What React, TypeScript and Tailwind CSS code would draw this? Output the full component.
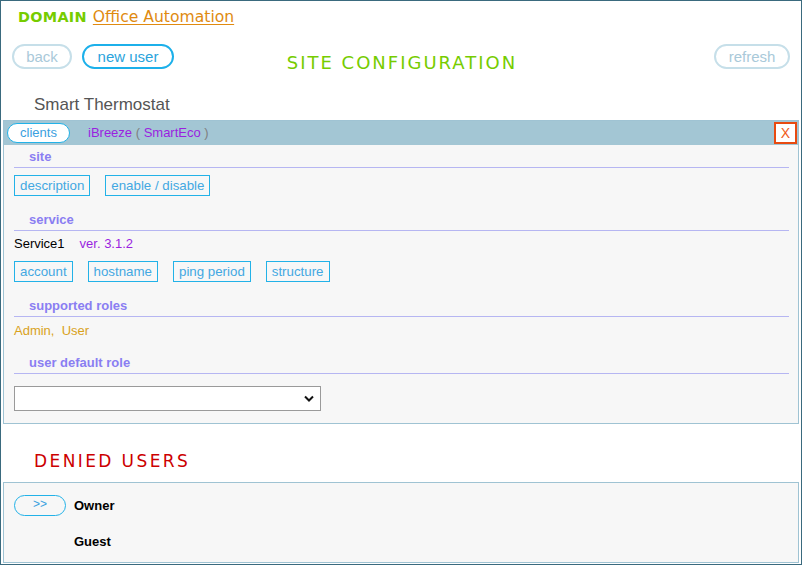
import React from "react";

const Heading = ({ children, mt }: { children: React.ReactNode; mt: string }) => (
  <div className={`${mt} border-b border-[#b6b6f2] pl-[15px] pt-[4px] pb-[2px] text-[13px] leading-[16px] font-bold text-[#8a7ef2]`}>
    {children}
  </div>
);

const SqBtn = ({ children }: { children: React.ReactNode }) => (
  <div className="h-[21px] border border-[#22b2e8] px-[5px] text-[13.3px] leading-[19px] text-[#43a8e2]">
    {children}
  </div>
);

export default function App() {
  return (
    <div className="w-[802px] h-[565px] border border-[#3a6a7e] bg-white overflow-hidden font-['Liberation_Sans',Arial,sans-serif]">
      {/* domain line */}
      <div className="pl-[17px] pt-[6px] h-[26px] leading-[20px] flex items-baseline gap-[6px] font-['DejaVu_Sans',Verdana,sans-serif]">
        <span className="text-[14.4px] font-bold text-[#76cc00] tracking-[0.3px]">DOMAIN</span>
        <span className="text-[15.6px] text-[#e08a10] underline underline-offset-[2px]">Office Automation</span>
      </div>

      {/* button row */}
      <div className="mt-[17px] h-[25px] grid grid-cols-[1fr_auto_1fr] items-start px-[11px]">
        <div className="flex gap-[10px]">
          <div className="h-[25px] w-[60px] rounded-full border-2 border-[#c6dfe9] text-[15px] leading-[21px] text-[#a9c9d9] text-center">back</div>
          <div className="h-[25px] w-[92px] rounded-full border-2 border-[#1cb0ea] text-[15px] leading-[21px] text-[#2aa4dc] text-center">new user</div>
        </div>
        <div className="pt-[8px] pl-[2px] text-[18px] leading-[22px] tracking-[2px] text-[#76cc00] font-['DejaVu_Sans',Verdana,sans-serif]">SITE CONFIGURATION</div>
        <div className="flex justify-end">
          <div className="h-[25px] w-[76px] rounded-full border-2 border-[#c6dfe9] text-[15px] leading-[21px] text-[#a9c9d9] text-center">refresh</div>
        </div>
      </div>

      {/* device name */}
      <div className="h-[51px] pl-[33px] pt-[26px] text-[17px] leading-[20px] text-[#555555]">Smart Thermostat</div>

      {/* config panel */}
      <div className="mx-[2px] border border-[#9fc3d3] bg-[#f7f7f7]">
        <div className="h-[24px] bg-[#a3c6d4] flex items-center pl-[3px] pr-[1px]">
          <div className="h-[20px] w-[63px] rounded-full border-[1.5px] border-[#22b2e8] bg-white text-[13px] leading-[17px] text-[#3aa0e0] text-center">clients</div>
          <div className="ml-[18px] text-[13px] text-[#7f7f7f]">
            <span className="text-[#9a1fe0]">iBreeze</span> ( <span className="text-[#9a1fe0]">SmartEco</span> )
          </div>
          <div className="ml-auto h-[22px] w-[23px] border-2 border-[#e84a10] bg-white text-[14px] leading-[18px] text-[#f05a20] text-center">X</div>
        </div>
        <div className="pl-[10px] pr-[9px] pb-[12px]">
          <Heading mt="mt-0">site</Heading>
          <div className="mt-[7px] flex gap-[15px]">
            <SqBtn>description</SqBtn>
            <SqBtn>enable / disable</SqBtn>
          </div>

          <Heading mt="mt-[12px]">service</Heading>
          <div className="mt-[5px] flex gap-[15px] text-[13px] leading-[16px]">
            <span className="text-black">Service1</span>
            <span className="text-[#9a1fe0]">ver. 3.1.2</span>
          </div>
          <div className="mt-[9px] flex gap-[15px]">
            <SqBtn>account</SqBtn>
            <SqBtn>hostname</SqBtn>
            <SqBtn>ping period</SqBtn>
            <SqBtn>structure</SqBtn>
          </div>

          <Heading mt="mt-[12px]">supported roles</Heading>
          <div className="mt-[6px] text-[13px] leading-[16px] text-[#d9a21c]">
            Admin,&nbsp; User
          </div>

          <Heading mt="mt-[12px]">user default role</Heading>
          <div className="mt-[12px] h-[25px] w-[307px] border border-[#9a9a9a] bg-white flex items-center justify-end pr-[6px]">
            <svg width="10" height="7" viewBox="0 0 10 7">
              <path d="M1 1.5 L5 5.5 L9 1.5" stroke="#111" strokeWidth="2" fill="none" />
            </svg>
          </div>
        </div>
      </div>

      {/* denied users */}
      <div className="h-[58px] pl-[33px] pt-[27px] text-[17px] leading-[20px] tracking-[2.4px] text-[#cc0000] font-['DejaVu_Sans',Verdana,sans-serif]">DENIED USERS</div>

      <div className="mx-[2px] border border-[#9fc3d3] bg-[#f7f7f7] pt-[12px] pb-[12px] pl-[10px]">
        <div className="flex items-center gap-[8px]">
          <div className="h-[21px] w-[52px] rounded-full border-[1.5px] border-[#22b2e8] text-[12px] leading-[17px] text-[#3aa0e0] text-center">&gt;&gt;</div>
          <span className="text-[13px] font-bold text-black">Owner</span>
        </div>
        <div className="mt-[18px] pl-[60px] text-[13px] leading-[16px] font-bold text-black">Guest</div>
      </div>
    </div>
  );
}
